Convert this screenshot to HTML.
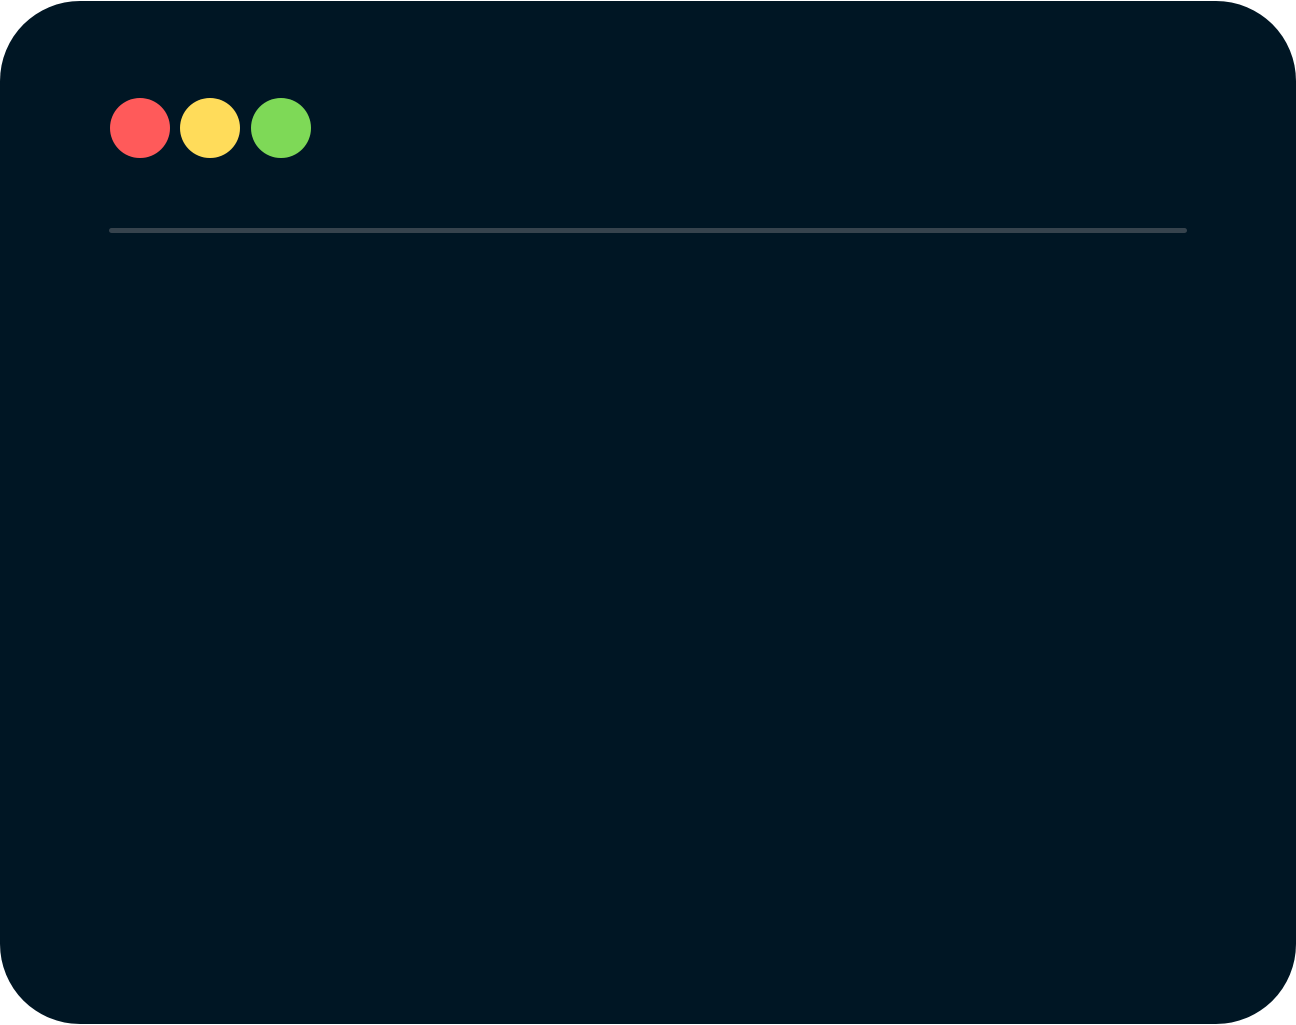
<!DOCTYPE html>
<html><head><style>
html,body{margin:0;padding:0;background:#fff;width:1296px;height:1025px;overflow:hidden}
.win{position:absolute;left:0;top:1px;width:1296px;height:1023px;background:#001624;border-radius:80px}
.d{position:absolute;top:97px;width:60px;height:60px;border-radius:50%}
.line{position:absolute;left:109px;top:228px;width:1078px;height:5px;background:#36434d;border-radius:3px}
</style></head><body>
<div class="win">
<div class="d" style="left:110px;background:#ff5a5a"></div>
<div class="d" style="left:180px;background:#ffdc5a"></div>
<div class="d" style="left:251px;background:#7ed957"></div>
<div class="line" style="top:227px"></div>
</div>
</body></html>
